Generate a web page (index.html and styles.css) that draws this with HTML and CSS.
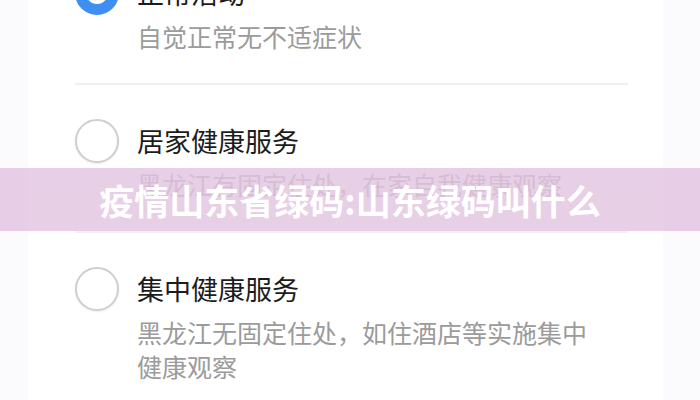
FILE: index.html
```html
<!DOCTYPE html>
<html>
  <head>
    <title>疫情山东省绿码</title>
    <link rel="stylesheet" href="styles.css">
  </head>
  <body>
    <div class="page">
      <div class="sheet">
        <div class="option-list">
          <div class="option">
            <span class="radio radio-checked"></span>
            <div class="option-text">
              <div class="option-title">正常活动</div>
              <div class="option-desc">自觉正常无不适症状</div>
            </div>
          </div>
          <div class="option">
            <span class="radio"></span>
            <div class="option-text">
              <div class="option-title">居家健康服务</div>
              <div class="option-desc">黑龙江有固定住处，在家自我健康观察</div>
            </div>
          </div>
          <div class="option last">
            <span class="radio"></span>
            <div class="option-text">
              <div class="option-title">集中健康服务</div>
              <div class="option-desc">黑龙江无固定住处，如住酒店等实施集中<br>健康观察</div>
            </div>
          </div>
        </div>
      </div>

      <!-- 标题横幅 -->
      <div class="banner">疫情山东省绿码:山东绿码叫什么</div>
    </div>
  </body>
</html>
```

FILE: styles.css
```css
body {
  margin: 0;
  background-color: #fbfafc;
  font-family: "Noto Sans CJK SC", "Noto Sans", sans-serif;
}
.page {
  position: relative;
  width: 700px;
  height: 400px;
  overflow: hidden;
}
.sheet {
  display: flow-root;
  margin: 0 37px 0 28px;
  height: 400px;
  background-color: #ffffff;
}
.option-list {
  margin-top: -63px;
  padding: 0 35px 0 47px;
}
.option {
  display: flex;
  align-items: flex-start;
  padding: 36px 0 30px;
  border-bottom: 2px solid #f0f0f0;
}
.option.last {
  border-bottom: none;
}
.radio {
  flex: none;
  box-sizing: border-box;
  width: 44px;
  height: 44px;
  margin-top: -2px;
  border: 2px solid #cfcfcf;
  border-radius: 50%;
  background-color: #fff;
  box-shadow: 0 1px 2px rgba(0, 0, 0, 0.08);
}
.radio-checked {
  border: 11px solid #3f8ef2;
  box-shadow: none;
}
.option-text {
  margin-left: 18px;
}
.option-title {
  font-size: 27px;
  line-height: 40px;
  color: #1c1c1c;
  margin-bottom: 6px;
}
.option-desc {
  font-size: 25px;
  line-height: 34px;
  color: #9b9b9b;
}
.banner {
  position: absolute;
  left: 0;
  right: 0;
  top: 168px;
  height: 63px;
  line-height: 63px;
  text-align: center;
  background-color: rgba(226, 196, 224, 0.82);
  color: #ffffff;
  font-size: 35px;
  font-weight: 700;
}
```
